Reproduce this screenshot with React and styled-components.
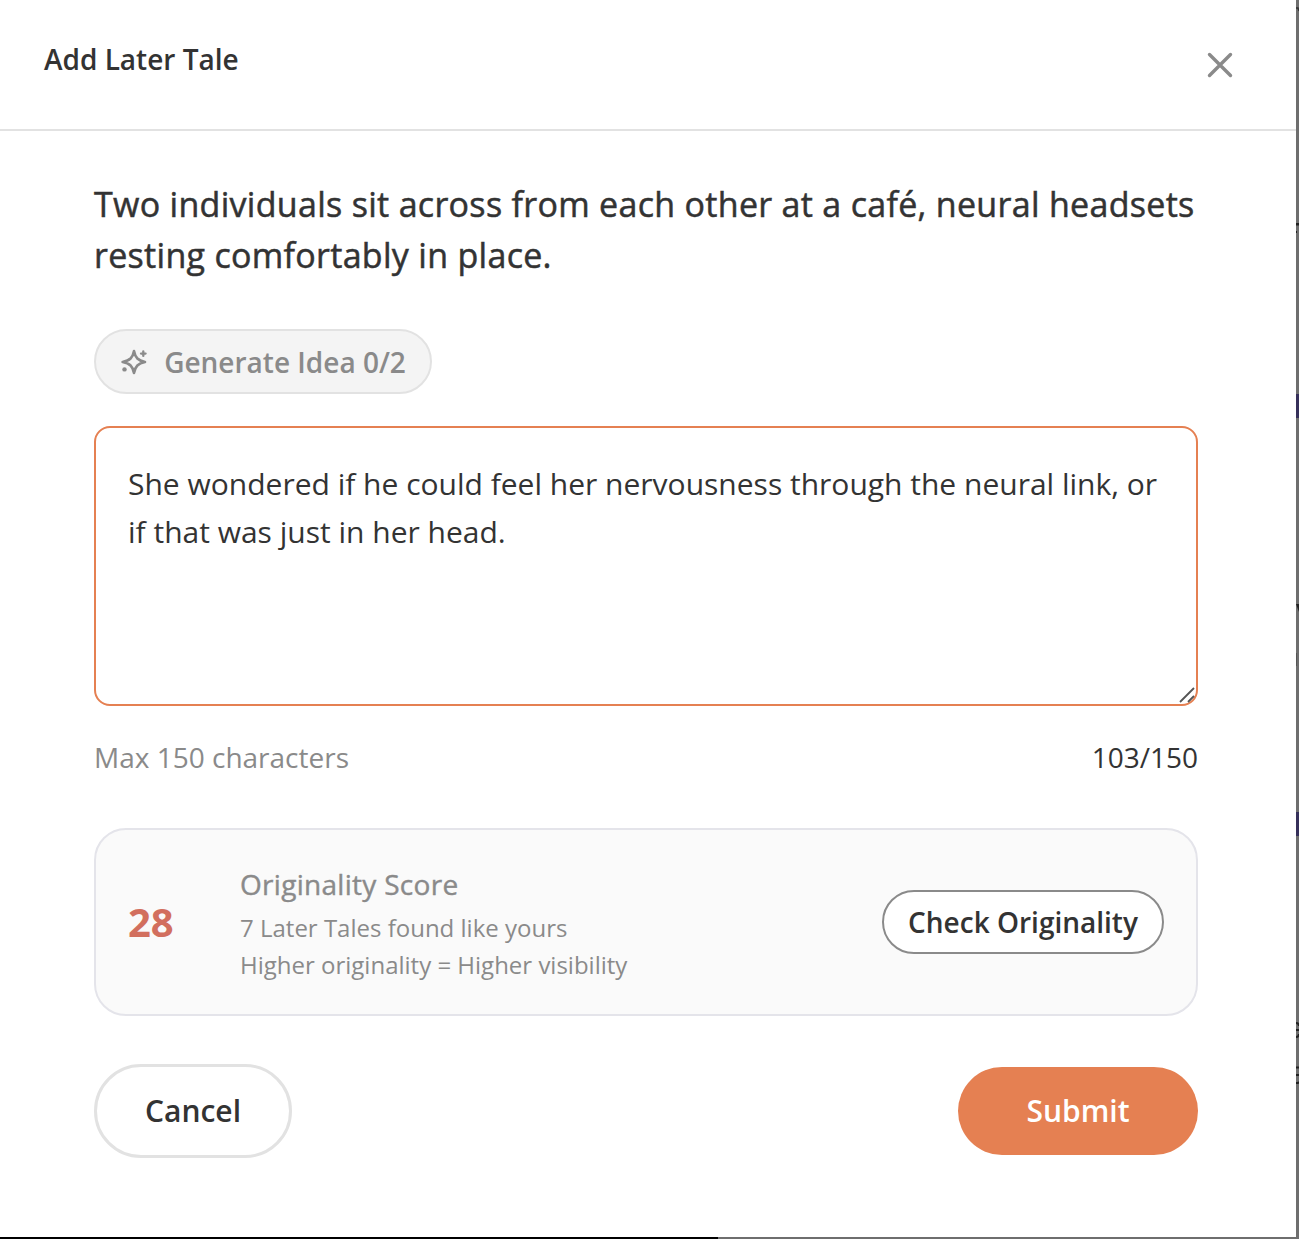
import React, { useState } from "react";
import styled, { createGlobalStyle } from "styled-components";

const GlobalStyle = createGlobalStyle`
  *, *::before, *::after { box-sizing: border-box; }
  html, body { margin: 0; padding: 0; }
  body {
    background: #6e6e6e;
    font-family: "Open Sans", "Noto Sans", sans-serif;
    color: #333;
    overflow: hidden;
  }
  button, textarea { font-family: inherit; }
`;

const Screen = styled.div`
  display: grid;
  grid-template-columns: 1296px 3px;
  grid-template-rows: 1237px 2px;
  width: 1299px;
  height: 1239px;
  background: #6e6e6e;
`;

const Dialog = styled.section`
  display: flex;
  flex-direction: column;
  background: #fff;
`;

const Backdrop = styled.svg`
  display: block;
  width: 3px;
  height: 1237px;
`;

const BottomEdge = styled.div`
  width: 718px;
  height: 2px;
  background: #000;
`;

const Header = styled.header`
  display: flex;
  justify-content: space-between;
  align-items: flex-start;
  height: 131px;
  padding: 40px 60px 0 44px;
  border-bottom: 2px solid #e2e2e2;
`;

const Title = styled.h1`
  margin: 0;
  font-size: 28px;
  line-height: 38px;
  font-weight: 600;
`;

const CloseButton = styled.button`
  display: flex;
  margin-top: 9px;
  padding: 0;
  border: 0;
  background: none;
`;

const Body = styled.div`
  display: flex;
  flex-direction: column;
  align-items: flex-start;
  width: 1104px;
  margin-left: 94px;
  padding-top: 48px;
`;

const Prompt = styled.p`
  margin: 0 -6px 48px 0;
  font-size: 34px;
  line-height: 51px;
  letter-spacing: 0.3px;
  -webkit-text-stroke: 0.5px currentColor;
`;

const PillButton = styled.button`
  display: flex;
  align-items: center;
  justify-content: center;
  gap: 16px;
  width: ${(p) => p.$width}px;
  height: ${(p) => p.$height}px;
  padding: 0;
  border: ${(p) => p.$border || "0"};
  border-radius: 999px;
  background: ${(p) => p.$fill || "#fff"};
  color: ${(p) => p.$color || "#333"};
  font-size: ${(p) => p.$size || 28}px;
  line-height: 1.4;
  font-weight: 600;
  white-space: nowrap;
`;

const PillLabel = styled.span`
  padding-top: 2px;
`;

const Field = styled.div`
  position: relative;
  width: 100%;
  height: 280px;
  margin-top: 32px;
`;

const TextArea = styled.textarea`
  display: block;
  width: 100%;
  height: 100%;
  padding: 32px;
  border: 2px solid #e58052;
  border-radius: 16px;
  outline: none;
  resize: none;
  overflow: hidden;
  background: #fff;
  color: #333;
  font-size: 30px;
  line-height: 48px;
`;

const Grip = styled.svg`
  position: absolute;
  right: 2px;
  bottom: 2px;
  pointer-events: none;
`;

const Counter = styled.div`
  display: flex;
  justify-content: space-between;
  width: 100%;
  margin-top: 31px;
  font-size: 28px;
  line-height: 40px;
`;

const Hint = styled.span`
  color: #8a8a8a;
`;

const ScoreCard = styled.div`
  display: flex;
  align-items: center;
  width: 100%;
  height: 188px;
  margin-top: 51px;
  padding: 0 32px;
  border: 2px solid #e4e4ea;
  border-radius: 32px;
  background: #fafafa;
`;

const Score = styled.strong`
  width: 112px;
  color: #d26f5e;
  font-size: 40px;
  line-height: 56px;
  font-weight: 700;
`;

const ScoreText = styled.div`
  flex: 1;
  padding-top: 3px;
  color: #8a8a8a;
  font-size: 24px;
  line-height: 37px;
`;

const ScoreTitle = styled.div`
  margin-bottom: 5px;
  font-size: 28px;
  line-height: 40px;
  letter-spacing: 0.29px;
  -webkit-text-stroke: 0.4px currentColor;
`;

const Actions = styled.div`
  display: flex;
  justify-content: space-between;
  align-items: center;
  width: 100%;
  margin-top: 48px;
`;

const limit = 150;

export default function App() {
  const [text, setText] = useState(
    "She wondered if he could feel her nervousness through the neural link, or if that was just in her head."
  );
  return (
    <>
      <GlobalStyle />
      <Screen>
        <Dialog>
          <Header>
            <Title>Add Later Tale</Title>
            <CloseButton aria-label="Close">
              <svg width="32" height="32" viewBox="0 0 32 32" fill="none" stroke="#8a8a8a" strokeWidth="3.4" strokeLinecap="round">
                <path d="M5.5 5.5l21 21M26.5 5.5l-21 21" />
              </svg>
            </CloseButton>
          </Header>
          <Body>
            <Prompt>
              Two individuals sit across from each other at a café, neural headsets resting comfortably in place.
            </Prompt>
            <PillButton $width={338} $height={65} $border="2px solid #e2e2e2" $fill="#f4f4f4" $color="#8a8a8a">
              <svg width="28" height="28" viewBox="0 0 28 28" fill="none" stroke="#8a8a8a" strokeWidth="2.6" strokeLinecap="round" strokeLinejoin="round">
                <path d="M14 3C15.300 9.800 18 12.600 25 14C18 15.400 15.300 18.200 14 25C12.700 18.200 10 15.400 2.600 14C10 12.600 12.700 9.800 14 3Z" />
                <path d="M23.300 3.300v4.600M21 5.600h4.600" strokeWidth="2.3" />
                <path d="M4.500 21.400h.01" strokeWidth="4.400" />
              </svg>
              <PillLabel>Generate Idea 0/2</PillLabel>
            </PillButton>
            <Field>
              <TextArea spellCheck={false} maxLength={limit} value={text} onChange={(e) => setText(e.target.value)} />
              <Grip width="18" height="18" viewBox="0 0 18 18" stroke="#555" strokeWidth="1.8">
                <path d="M2 16L16 2M10 16L16 10" />
              </Grip>
            </Field>
            <Counter>
              <Hint>Max {limit} characters</Hint>
              <span>{text.length}/{limit}</span>
            </Counter>
            <ScoreCard>
              <Score>28</Score>
              <ScoreText>
                <ScoreTitle>Originality Score</ScoreTitle>
                <div>7 Later Tales found like yours</div>
                <div>Higher originality = Higher visibility</div>
              </ScoreText>
              <PillButton $width={282} $height={64} $border="2px solid #8a8a8a">
                <PillLabel>Check Originality</PillLabel>
              </PillButton>
            </ScoreCard>
            <Actions>
              <PillButton $width={198} $height={94} $border="3px solid #e2e2e2" $size={30}>Cancel</PillButton>
              <PillButton $width={240} $height={88} $fill="#e58052" $color="#fff" $size={30}>Submit</PillButton>
            </Actions>
          </Body>
        </Dialog>
        <Backdrop viewBox="0 0 3 1237">
          <rect width="3" height="1237" fill="#6e6e6e" />
          <path d="M0 8h2l1 3" fill="none" stroke="#333" strokeWidth="1.5" />
          <rect y="223" width="3" height="2.5" fill="#222" />
          <rect y="231" width="1" height="2" fill="#222" />
          <rect y="394" width="3" height="24" fill="#36305a" />
          <path d="M0 604h3v8z" fill="#222" />
          <rect y="653" width="1" height="13" fill="#555" />
          <rect y="812" width="3" height="24" fill="#36305a" />
          <path d="M0 1023q3 0 3 3M0 1030h3M0 1037q3 0 3-3" fill="none" stroke="#222" strokeWidth="2" />
          <path d="M0 1067.500h3M0 1075h3M0 1083h2l1-1" fill="none" stroke="#222" strokeWidth="2" />
        </Backdrop>
        <BottomEdge />
      </Screen>
    </>
  );
}
